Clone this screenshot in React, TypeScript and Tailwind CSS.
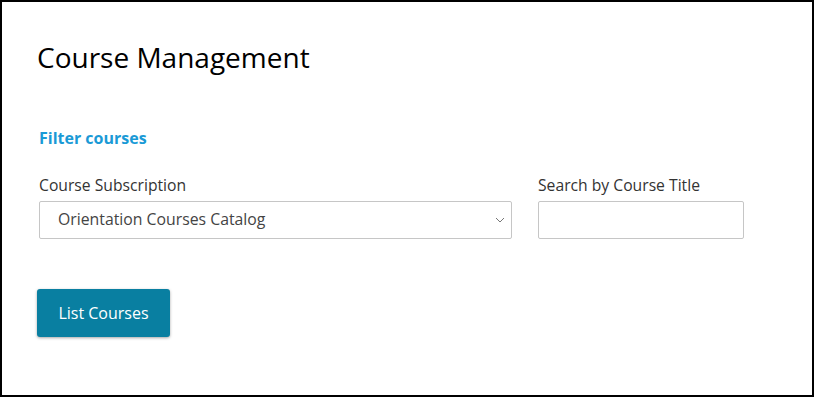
export default function App() {
  return (
    <div
      className="h-[397px] w-[814px] border-2 border-black bg-white"
      style={{ fontFamily: '"Open Sans", sans-serif' }}
    >
      <div className="pl-[35px] pt-[35px]">
        <h1 className="text-[28px] leading-[40px] text-black">Course Management</h1>

        <h2 className="mt-[49px] pl-[2px] text-[16px] font-bold leading-[24px] text-[#1a9ad6]">
          Filter courses
        </h2>

        <div className="mt-[25px] flex gap-[26px] pl-[2px]">
          <div className="flex flex-col">
            <label className="text-[15.7px] leading-[20px] text-[#333333]">Course Subscription</label>
            <div className="mt-[6px] flex h-[38px] w-[473px] items-center justify-between rounded-[2px] border border-[#c6c6c6] pl-[18px] pr-[6px]">
              <span className="text-[15.8px] text-[#444444]">Orientation Courses Catalog</span>
              <svg width="10" height="6" viewBox="0 0 10 6" fill="none" stroke="#777" strokeWidth="1">
                <path d="M1 1l4 4 4-4" />
              </svg>
            </div>
          </div>
          <div className="flex flex-col">
            <label className="text-[15.7px] leading-[20px] text-[#333333]">Search by Course Title</label>
            <input
              type="text"
              className="mt-[6px] h-[38px] w-[206px] rounded-[2px] border border-[#c6c6c6] outline-none"
            />
          </div>
        </div>

        <button className="mt-[50px] h-[48px] w-[133px] rounded-[3px] bg-[#097fa1] text-[16px] text-white shadow-[0_1px_3px_rgba(0,0,0,0.35)]">
          List Courses
        </button>
      </div>
    </div>
  );
}
